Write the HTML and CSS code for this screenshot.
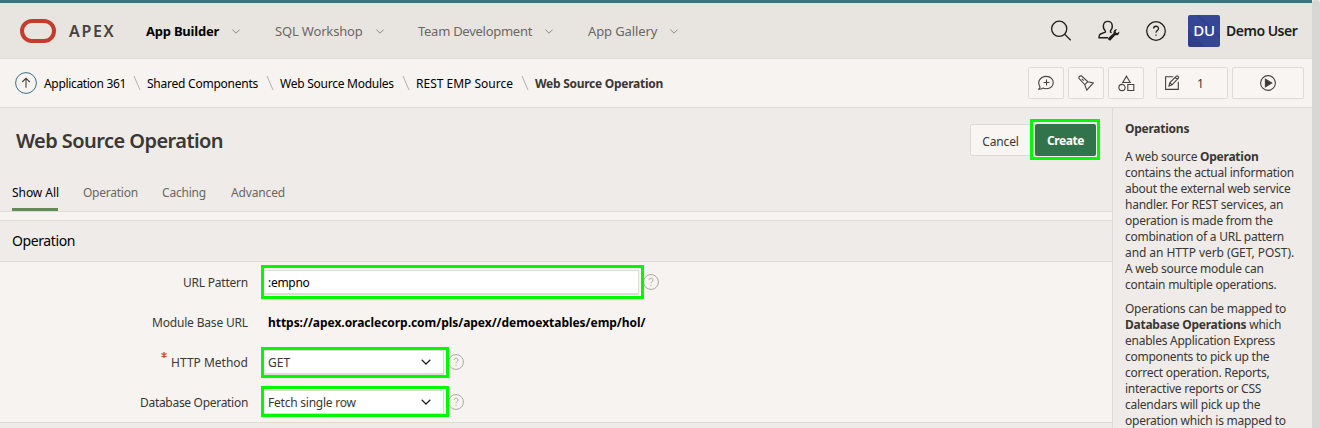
FILE: index.html
```html
<!DOCTYPE html>
<html lang="en">
<head>
<meta charset="utf-8">
<title>Web Source Operation</title>
<link rel="stylesheet" href="styles.css">
</head>
<body>
<svg width="0" height="0" class="defs">
  <symbol id="chev" viewBox="0 0 8 5"><path d="M.4.6 4 4.2 7.6.6" fill="none" stroke="currentColor"/></symbol>
  <symbol id="help" viewBox="0 0 20 20"><circle cx="10" cy="10" r="9.3"/><path d="M7.6 7.6c0-3.2 4.9-3.1 4.9-.1 0 2-2.5 2-2.5 4.2"/><path d="M10 13.6v1.2"/></symbol>
</svg>
<div class="app">
  <div class="window">
    <header class="top">
      <svg class="logo" width="36" height="24" viewBox="0 0 36 24"><rect x="2" y="2" width="32" height="20" rx="10" fill="none" stroke="#c63b2b" stroke-width="4"/></svg>
      <span class="brand">APEX</span>
      <nav class="nav">
        <a class="nav-item builder active">App Builder<svg class="chev"><use href="#chev"/></svg></a>
        <a class="nav-item sql">SQL Workshop<svg class="chev"><use href="#chev"/></svg></a>
        <a class="nav-item team">Team Development<svg class="chev"><use href="#chev"/></svg></a>
        <a class="nav-item gallery">App Gallery<svg class="chev"><use href="#chev"/></svg></a>
      </nav>
      <div class="tools">
        <svg class="line" width="22" height="22" viewBox="0 0 22 22"><circle cx="9.2" cy="8.8" r="7.6"/><path d="m14.7 14.3 6 6"/></svg>
        <svg class="line" width="22" height="22" viewBox="0 0 22 22"><path d="M7.400 10.800C5.500 9.400 5.200 7 5.400 5.300 6.300.100 13.500.100 14.200 5.300c.3 1.800-.2 4-1.800 5.400v1.300l1.200.7M7.400 10.800v1.300L2.500 14Q1 14.700 1 17.700H10" stroke-width="1.4"/><path d="m10.200 18 5.300-4.800c-.5-2.200 1.200-4.400 3.700-4l-1.600 2 .4 1.600 1.500.3 1.800-1.700c.5 2.800-1.800 4.500-4.100 3.800l-4.800 5.200q-2.800.5-2.200-2.400Z" fill="#201e1c" stroke="none"/></svg>
        <svg class="line" width="20" height="20" viewBox="0 0 20 20"><use href="#help" width="20" height="20"/></svg>
      </div>
      <div class="avatar">DU</div>
      <span class="user">Demo User</span>
    </header>
    <div class="crumbs">
      <svg class="up" width="22" height="22" viewBox="0 0 22 22"><circle cx="11" cy="11" r="10.400" fill="none" stroke="#3a7083"/><path d="M11 15.800V6.400M7.200 10 11 6.300l3.800 3.700" fill="none" stroke="#45423f" stroke-width="1.100"/></svg>
      <a class="c1">Application 361</a><svg class="slash"><path d="m1 1 6 14"/></svg>
      <a class="c2">Shared Components</a><svg class="slash"><path d="m1 1 6 14"/></svg>
      <a class="c3">Web Source Modules</a><svg class="slash"><path d="m1 1 6 14"/></svg>
      <a class="c4">REST EMP Source</a><svg class="slash"><path d="m1 1 6 14"/></svg>
      <b class="c5">Web Source Operation</b>
      <div class="actions">
        <span class="btn"><svg width="16" height="16" viewBox="0 0 16 16"><path d="M.6 14.200Q2.400 13 1.800 11.400C-1.200 6.800 2.600 1.400 8.200 1.400c9.400 0 9.400 12.300 0 12.300-1.300 0-2.300-.2-3.300-.6-1.200.9-2.400 1.100-4.300 1.100ZM8.500 4.500v6M5.500 7.500h6"/></svg></span>
        <span class="btn"><svg width="16" height="16" viewBox="0 0 16 16"><path d="M.9 3.300Q.7.600 3.400.900L9.800 6.700l5.500 1.200-6.500 7.200-2-5.400ZM9.800 6.700l-3 3M3.800 3.900l1.900 1.800"/></svg></span>
        <span class="btn"><svg width="17" height="17" viewBox="0 0 17 17"><path d="M8.500 1.200 12.200 7.500H4.800ZM9.800 9.500h6v6h-6Z"/><circle cx="4" cy="12.500" r="3.100"/></svg></span>
        <span class="btn edit"><svg width="16" height="16" viewBox="0 0 16 16"><path d="M9.300 1.700H1.600v12.700h12.700V6.800M5 11l.9-3.400 6.500-6.500q.8-.5 1.700.3.900.9.300 1.700L8 9.900 5 11Zm6.200-8.700 2.200 2.200M5.900 7.600 8 9.900"/></svg><i class="count">1</i></span>
        <span class="btn run"><svg width="16" height="16" viewBox="0 0 16 16"><circle cx="8" cy="8" r="7.400"/><path d="M5.400 4.300v7.400L11.700 8Z" fill="#3a3734"/></svg></span>
      </div>
    </div>
    <div class="body">
      <main class="main">
        <section class="title">
          <h1>Web Source Operation</h1>
          <div class="buttons"><button class="cancel">Cancel</button><button class="create">Create<i class="mark m-create"></i></button></div>
        </section>
        <div class="tabs"><a class="on">Show All</a><a class="t2">Operation</a><a class="t3">Caching</a><a class="t4">Advanced</a></div>
        <h2>Operation</h2>
        <div class="form">
          <div class="row"><label class="l1">URL Pattern</label><div class="field text">:empno<i class="mark m-text"></i></div><svg class="q" viewBox="0 0 20 20"><use href="#help"/></svg></div>
          <div class="row"><label class="l2">Module Base URL</label><b class="url">https://apex.oraclecorp.com/pls/apex//demoextables/emp/hol/</b></div>
          <div class="row"><label class="l3"><svg class="req" width="6" height="6" viewBox="0 0 6 6"><path d="M3 0v6M.4 1.500l5.200 3M5.600 1.500l-5.200 3" stroke="#cf4a3d" stroke-width="1.300"/></svg>HTTP Method</label><div class="field sel"><span>GET</span><svg class="drop"><use href="#chev"/></svg><i class="mark m-get"></i></div><svg class="q" viewBox="0 0 20 20"><use href="#help"/></svg></div>
          <div class="row"><label class="l4">Database Operation</label><div class="field sel"><span class="fetch">Fetch single row</span><svg class="drop"><use href="#chev"/></svg><i class="mark m-fetch"></i></div><svg class="q" viewBox="0 0 20 20"><use href="#help"/></svg></div>
        </div>
        <div class="next"></div>
      </main>
      <aside class="side">
        <h3>Operations</h3>
        <p>A web source <b>Operation</b><br>contains the actual information<br>about the external web service<br>handler. For REST services, an<br>operation is made from the<br>combination of a URL pattern<br><span class="caps">and an HTTP verb (GET, POST).</span><br>A web source module can<br>contain multiple operations.</p>
        <p>Operations can be mapped to<br><b>Database Operations</b> which<br>enables Application Express<br>components to pick up the<br>correct operation. Reports,<br>interactive reports or CSS<br>calendars will pick up the<br>operation which is mapped to</p>
      </aside>
    </div>
  </div>
  <div class="scroll"></div>
</div>
</body>
</html>
```
FILE: styles.css
```css
* { box-sizing: border-box; }
body { margin: 0; overflow: hidden; font: 12px/16px "Noto Sans", "Open Sans", sans-serif; color: #3a3734; background: #efebe8; }
i { font-style: normal; }
h1, h2, h3, p { margin: 0; }
svg { flex: none; display: block; }
.defs { position: absolute; }
.app { display: flex; height: 428px; }
.window { width: 1312px; display: flex; flex-direction: column; }
.scroll { width: 8px; background: #d8d7d5; border-radius: 4px 4px 0 0; }

.top { height: 59px; flex: none; display: flex; align-items: center; padding-left: 20px; background: #e8e5e0; border-top: 3px solid #3c7380; border-bottom: 1px solid #dedad5; white-space: nowrap; }
.brand { width: 77px; margin-left: 13px; font-size: 16px; font-weight: 600; letter-spacing: 1.7px; color: #45423f; }
.nav { display: flex; font-size: 13px; color: #6b6763; }
.nav-item { display: flex; align-items: center; justify-content: space-between; height: 20px; }
.builder { width: 94px; margin-right: 35px; letter-spacing: -.22px; }
.sql { width: 109px; margin-right: 34px; letter-spacing: -.17px; }
.team { width: 135px; margin-right: 35px; letter-spacing: -.27px; }
.gallery { width: 90px; letter-spacing: -.12px; }
.active { font-weight: 700; color: #000; }
.chev { width: 8px; height: 5px; margin-top: 2px; color: #8b8783; }
.tools { display: flex; align-items: center; gap: 26px; margin-left: auto; }
.line { fill: none; stroke: #201e1c; stroke-width: 1.3; }
.avatar { width: 32px; height: 32px; margin: 0 6px 0 22px; border-radius: 2px; background: linear-gradient(45deg, #303e8c 0 28%, #364697 28% 62%, #32408f 62% 68%, #364697 68%); color: #fff; font: 500 15px/31px "Noto Sans", sans-serif; text-align: center; letter-spacing: -.3px; }
.user { width: 86px; font-size: 14px; font-weight: 600; letter-spacing: -.5px; color: #201e1c; }

.crumbs { height: 49px; flex: none; display: flex; align-items: center; padding: 0 8px 0 15px; background: #f7f3f0; border-bottom: 1px solid #dedad5; color: #000; white-space: nowrap; }
.crumbs > a, .crumbs > b { padding-top: 2px; }
.up { margin-right: 7px; }
.c1 { width: 82px; letter-spacing: -.33px; }
.c2 { width: 112px; letter-spacing: -.24px; }
.c3 { width: 115px; letter-spacing: -.25px; }
.c4 { width: 98px; }
.c5 { color: #3a3734; letter-spacing: -.27px; }
.slash { width: 8px; height: 16px; margin: 0 6px 0 7px; fill: none; stroke: #b5b0ac; }
.actions { display: flex; margin-left: auto; gap: 4px; color: #3a3734; }
.btn { display: flex; align-items: center; justify-content: center; width: 36px; height: 32px; border: 1px solid #dedad5; border-radius: 2px; background: #f8f5f2; }
.btn svg { fill: none; stroke: #45423f; stroke-width: 1.1; }
.edit { width: 72px; margin-left: 8px; justify-content: flex-start; padding-left: 7px; }
.count { margin-left: 17px; padding-top: 2px; }
.run { width: 72px; }

.body { display: flex; flex: 1; min-height: 0; }
.main { width: 1112px; background: #f7f3f0; }
.title { display: flex; justify-content: space-between; height: 69px; padding: 16px 16px 0; background: #efebe8; }
h1 { font: 600 20px/33px "Noto Sans", sans-serif; letter-spacing: -.56px; }
.buttons { display: flex; }
button { height: 32px; padding: 2px 0 0; font: 400 12px/30px "Noto Sans", sans-serif; }
.cancel { width: 61px; border: 1px solid #dedad5; background: #f8f5f2; color: #3a3734; border-radius: 2px; letter-spacing: -.15px; margin-right: 4px; }
.create { position: relative; width: 61px; border: 0; border-radius: 2px; background: #31734b; color: #fff; font-weight: 700; letter-spacing: -.4px; }
.tabs { display: flex; gap: 25px; height: 35px; padding-left: 12px; background: #efebe8; border-bottom: 1px solid #dedad5; color: #6b6763; }
.tabs a { height: 34px; padding-top: 8px; white-space: nowrap; }
.tabs .on { width: 46px; color: #000; letter-spacing: -.05px; border-bottom: 3px solid #628b58; }
.t2 { width: 54px; letter-spacing: -.25px; }
.t3 { width: 44px; letter-spacing: -.2px; }
.t4 { letter-spacing: -.15px; }
h2 { height: 42px; margin-top: 8px; padding-left: 12px; background: #efebe8; border: solid #dedad5; border-width: 1px 0; font: 400 14px/40px "Noto Sans", sans-serif; letter-spacing: -.4px; color: #000; }
.form { height: 161px; padding-top: 1px; border-bottom: 1px solid #dedad5; }
.next { height: 5px; background: #efebe8; }
.row { display: flex; align-items: center; height: 40px; white-space: nowrap; }
label { display: flex; justify-content: flex-end; width: 248px; margin-right: 14px; }
.l1 { letter-spacing: -.22px; }
.l2 { letter-spacing: -.17px; }
.l4 { letter-spacing: -.3px; }
.req { margin: -3px 4px 0 0; }
.url { margin-left: 6px; color: #000; letter-spacing: -.04px; }
.field { position: relative; display: flex; align-items: center; height: 25px; margin-bottom: 1px; padding: 1px 0 0 6px; background: #fff; border: solid #dedad5; border-width: 1px 1px 2px 0; }
.text { width: 377px; color: #000; letter-spacing: -.3px; }
.sel { width: 182px; justify-content: space-between; padding-right: 12px; }
.fetch { letter-spacing: -.23px; }
.drop { width: 10px; height: 6px; margin-top: -2px; color: #201e1c; }
.q { width: 16px; height: 16px; margin: 0 0 2px 4px; fill: none; stroke: #aaa5a1; stroke-width: 1.2; }
/* Highlight frames laid over the controls */
.mark { position: absolute; border: 3px solid #00f900; }
.m-create { left: -5px; top: -5px; width: 70px; height: 41px; }
.m-text { left: -1px; top: -6px; width: 383px; height: 34px; }
.m-get { left: -1px; top: -4px; width: 188px; height: 31px; }
.m-fetch { left: -1px; top: -5px; width: 188px; height: 31px; }

.side { width: 200px; padding: 13px 0 0 12px; background: #efebe8; border-left: 1px solid #dedad5; white-space: nowrap; letter-spacing: -.25px; overflow: hidden; }
h3 { font-size: 12px; line-height: 16px; font-weight: 700; margin-bottom: 12px; }
.side p { margin-bottom: 8px; }
.caps { letter-spacing: -.07px; }
```
